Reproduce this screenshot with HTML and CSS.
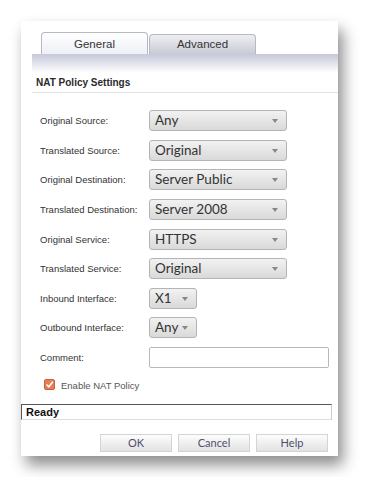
FILE: index.html
```html
<!DOCTYPE html>
<html lang="en">
<head>
  <meta charset="UTF-8">
  <meta name="viewport" content="width=device-width, initial-scale=1.0">
  <title>NAT Policy</title>
  <link rel="stylesheet" href="styles.css">
</head>
<body>
  <div class="dialog">
    <div class="tabs">
      <div class="tab active">General</div>
      <div class="tab">Advanced</div>
    </div>
    <div class="band"></div>

    <h2 class="section">NAT Policy Settings</h2>

    <div class="form">
      <div class="row">
        <label>Original Source:</label>
        <div class="select wide">Any<span class="arrow"></span></div>
      </div>
      <div class="row">
        <label>Translated Source:</label>
        <div class="select wide">Original<span class="arrow"></span></div>
      </div>
      <div class="row">
        <label>Original Destination:</label>
        <div class="select wide">Server Public<span class="arrow"></span></div>
      </div>
      <div class="row">
        <label>Translated Destination:</label>
        <div class="select wide">Server 2008<span class="arrow"></span></div>
      </div>
      <div class="row">
        <label>Original Service:</label>
        <div class="select wide">HTTPS<span class="arrow"></span></div>
      </div>
      <div class="row">
        <label>Translated Service:</label>
        <div class="select wide">Original<span class="arrow"></span></div>
      </div>
      <div class="row">
        <label>Inbound Interface:</label>
        <div class="select small">X1<span class="arrow"></span></div>
      </div>
      <div class="row">
        <label>Outbound Interface:</label>
        <div class="select small">Any<span class="arrow"></span></div>
      </div>
      <div class="row">
        <label>Comment:</label>
        <div class="input"></div>
      </div>
    </div>

    <div class="check-row">
      <span class="checkbox">
        <svg width="9" height="9" viewBox="0 0 9 9"><path d="M1.5 4.5 L3.8 6.8 L7.8 1.8" fill="none" stroke="#fff" stroke-width="1.6"/></svg>
      </span>
      <span class="check-label">Enable NAT Policy</span>
    </div>

    <div class="status">Ready</div>

    <div class="buttons">
      <div class="btn">OK</div>
      <div class="btn">Cancel</div>
      <div class="btn">Help</div>
    </div>
  </div>
</body>
</html>
```

FILE: styles.css
```css
body {
  font-family: "Liberation Sans", Arial, sans-serif;
  background-color: #fff;
  margin: 0;
  padding: 21px;
}
.dialog {
  width: 317px;
  height: 435px;
  background: #fff;
  box-shadow: 5px 9px 14px rgba(0, 0, 0, 0.45);
  overflow: hidden;
}
.tabs {
  display: flex;
  align-items: flex-end;
  padding: 11px 0 0 20px;
  height: 22px;
}
.tab {
  width: 105px;
  height: 19px;
  border: 1px solid #b8b8c0;
  border-bottom: none;
  border-radius: 4px 4px 0 0;
  background: linear-gradient(#eeeef2, #c9cad6);
  color: #333;
  font-size: 11.5px;
  text-align: center;
  line-height: 18px;
  margin-right: 1px;
}
.tab.active {
  height: 21px;
  background: linear-gradient(#fff, #eef0f6);
  line-height: 22px;
}
.band {
  margin-left: 11px;
  height: 18px;
  border-top: 1px solid #c9cad6;
  background: linear-gradient(#c8cbdc, #fff);
}
.section {
  margin: 4px 0 0 11px;
  padding: 0 0 4px 4px;
  font-size: 10px;
  font-weight: bold;
  color: #2a2a2a;
  border-bottom: 1px solid #e2e2e2;
}
.form {
  margin: 13px 0 0 19px;
}
.row {
  display: flex;
  align-items: center;
  height: 29.6px;
}
.row label {
  width: 109px;
  font-size: 9.5px;
  color: #333;
}
.select {
  position: relative;
  box-sizing: border-box;
  height: 21px;
  border: 1px solid #b4b4b4;
  border-radius: 3px;
  background: linear-gradient(#f2f2f2, #d9d9d9);
  font-family: Lato, "Open Sans", sans-serif;
  font-size: 13.5px;
  color: #333;
  padding-left: 5px;
  line-height: 19px;
}
.select.wide {
  width: 138px;
}
.select.small {
  width: 48px;
}
.arrow {
  position: absolute;
  right: 8px;
  top: 8px;
  border-left: 3px solid transparent;
  border-right: 3px solid transparent;
  border-top: 4px solid #888;
}
.input {
  width: 180px;
  height: 21px;
  box-sizing: border-box;
  border: 1px solid #b8b8b8;
  border-radius: 2px;
  background: #fff;
}
.check-row {
  display: flex;
  align-items: center;
  margin: 5px 0 0 23px;
}
.checkbox {
  width: 11px;
  height: 11px;
  border-radius: 2px;
  background: #e47f55;
  border: 1px solid #c9653d;
  box-sizing: border-box;
  display: flex;
  align-items: center;
  justify-content: center;
  margin-right: 6px;
}
.check-label {
  font-size: 9.5px;
  color: #555;
  padding-top: 3px;
}
.status {
  margin-top: 13px;
  width: 311px;
  height: 16px;
  box-sizing: border-box;
  border-top: 1px solid #555;
  border-left: 1px solid #555;
  border-right: 1px solid #ccc;
  border-bottom: 1px solid #ddd;
  font-size: 11px;
  font-weight: bold;
  color: #111;
  padding-left: 4px;
  line-height: 14px;
}
.buttons {
  display: flex;
  justify-content: flex-end;
  gap: 6px;
  margin: 14px 10px 0 0;
}
.btn {
  width: 72px;
  height: 18px;
  box-sizing: border-box;
  border: 1px solid #d4d4d4;
  background: linear-gradient(#fdfdfd, #e2e2e4);
  font-family: Lato, "Open Sans", sans-serif;
  font-size: 11px;
  color: #4e4e6a;
  text-align: center;
  line-height: 16px;
}
```
